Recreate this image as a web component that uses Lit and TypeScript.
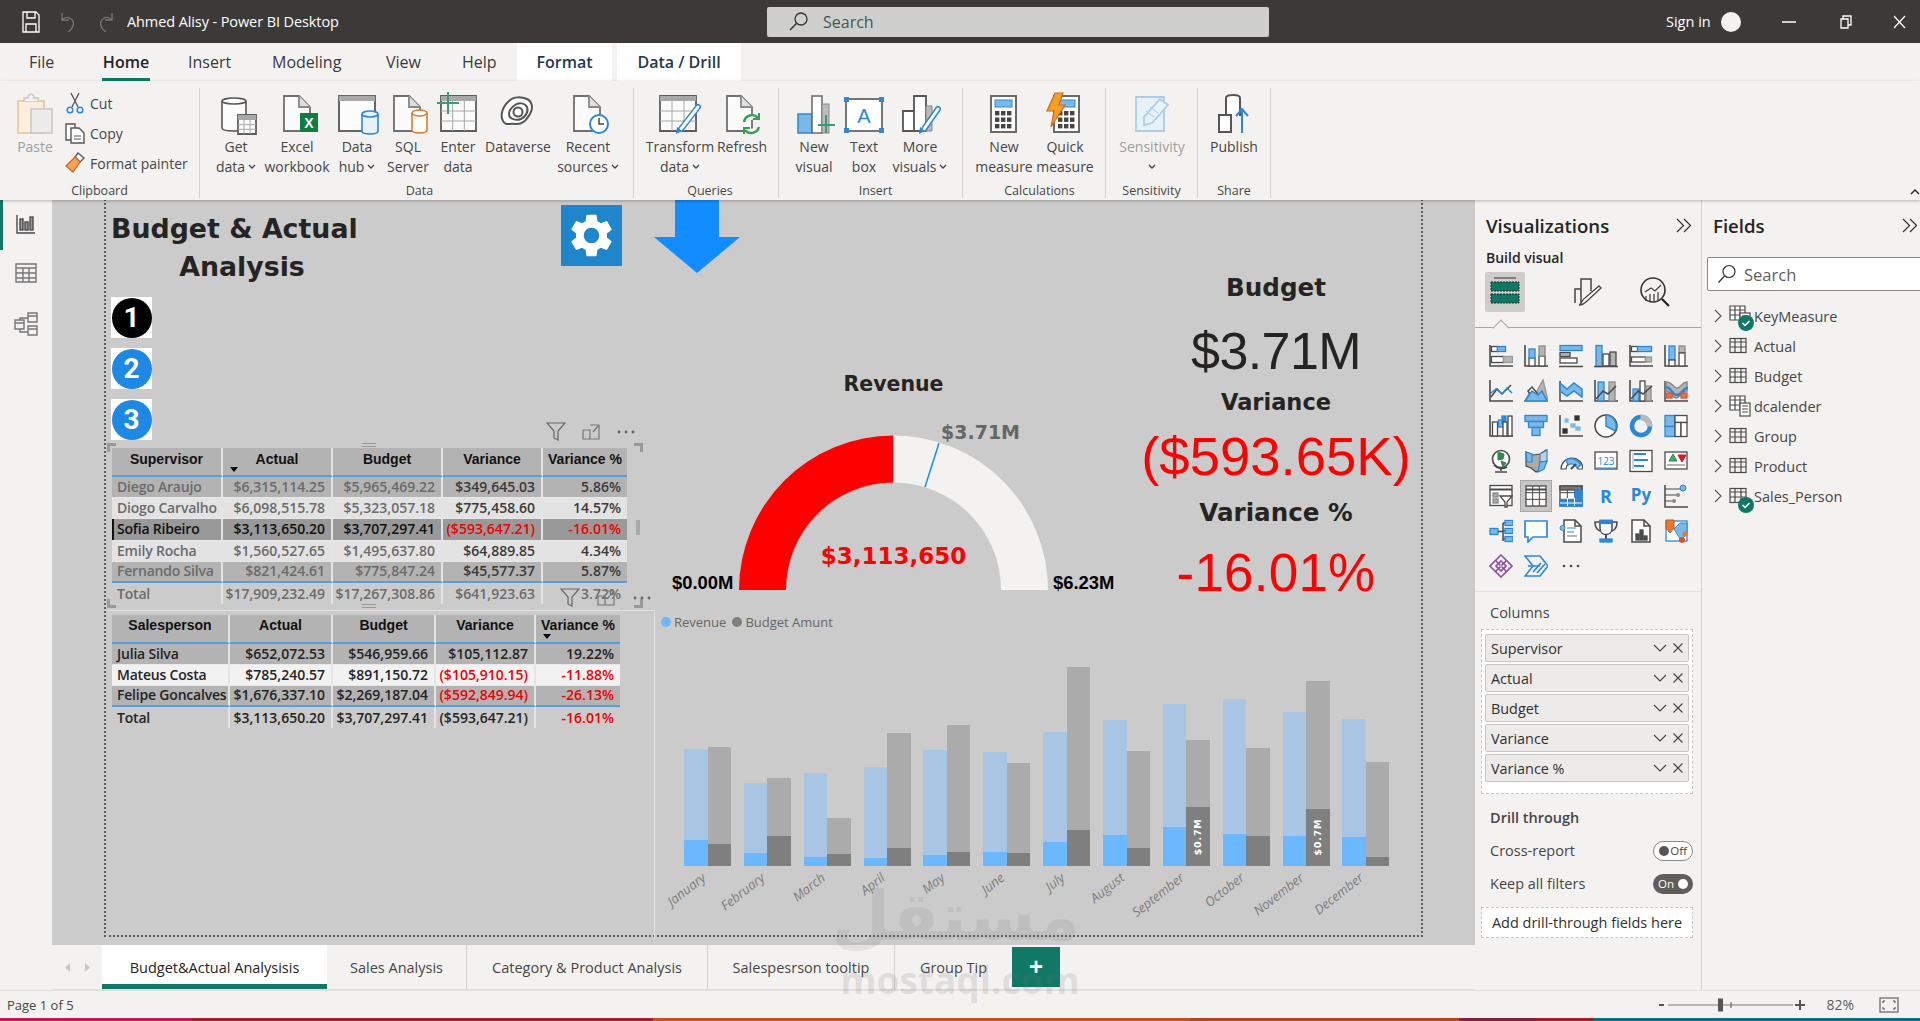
import { LitElement, html, css, svg } from "lit";
import { customElement } from "lit/decorators.js";

const K = "#4a4a4a", B = "#2b88d8", L = "#7ab8e8", G = "#b5b5b5", W = "#fff";
const R = (x: number, y: number, w: number, h: number, f = W, s = K) =>
  svg`<rect x=${x} y=${y} width=${w} height=${h} fill=${f} stroke=${s} stroke-width="1.3"/>`;
const P = (d: string, s = K, f = "none", sw = 1.5) => svg`<path d=${d} fill=${f} stroke=${s} stroke-width=${sw}/>`;
const A = P("M1 1v21h23", K, "none", 1.6);
const grid = (x: number, y: number, w: number, h: number, c: number, r: number, s = K, f = W) => {
  const parts = [R(x, y, w, h, f, s)];
  for (let i = 1; i < c; i++) parts.push(P(`M${x + (w * i) / c} ${y}v${h}`, s, "none", 1));
  for (let i = 1; i < r; i++) parts.push(P(`M${x} ${y + (h * i) / r}h${w}`, s, "none", 1));
  return parts;
};

const vizIcons = [
  svg`${A}${R(2.5, 2.5, 6, 5)}${R(8.5, 2.5, 8, 5, L, B)}${R(2.5, 12.5, 12, 6)}${R(14.5, 12.5, 9, 6, G, "#999")}`,
  svg`${A}${R(5, 14, 6, 8)}${R(5, 5, 6, 9, L, B)}${R(15, 12, 6, 10)}${R(15, 2, 6, 10, G, "#888")}`,
  svg`${R(1, 1.5, 22, 5, L, B)}${R(1, 8.5, 10, 4, G, K)}${R(1, 14, 17, 5)}${P("M0 22.5h24")}`,
  svg`${R(2, 1.5, 6, 21, L, B)}${R(9, 10, 6, 12, W, K)}${R(16, 8, 6, 14, G, K)}${P("M0 22.5h24")}`,
  svg`${A}${R(2.5, 2.5, 6, 5)}${R(8.5, 2.5, 14, 5, L, B)}${R(2.5, 13, 14, 5)}${R(16.5, 13, 6, 5, G, "#999")}`,
  svg`${A}${R(5, 2, 6, 14, L, B)}${R(5, 16, 6, 6)}${R(15, 2, 6, 7, G, "#888")}${R(15, 9, 6, 13)}`,
  svg`${A}${P("M2 18l6-8 5 5 9-9", K)}${P("M2 14l5-4 6 5 5-6 5 5", B)}`,
  svg`${P("M1 22L8 9l4 5 7-13 5 21z", "#999", G)}${P("M4 12l4-4 5 6-4 5z", K, W)}${P("M1 22l7-10 6 4 4-4 5 10z", B, L)}`,
  svg`${P("M1 2v20h23", K)}${P("M1 4l7 6 7-6 8 6v8l-8-6-7 5-7-5z", B, L)}`,
  svg`${A}${R(4, 3, 6, 19, L, B)}${R(15, 3, 6, 19, G, "#888")}${P("M2 20l7-8 5 3 8-8", K)}`,
  svg`${A}${R(4, 10, 6, 12, L, B)}${R(11, 2, 5, 20, W, K)}${R(17, 7, 5, 15, G, "#888")}${P("M2 20l7-8 5 3 9-8", K)}`,
  svg`${P("M1 2v20h23", K)}${P("M2 3c7 0 7 6 11 6s5-6 10-6v9c-5 0-7 7-11 7S7 12 2 12z", "#888", G)}${P("M2 8c5 0 6 8 11 8s5-7 11-7", B, "none", 2.5)}${R(2, 14, 6, 5, "#e8762d", "#c55")}${R(17, 14, 6, 5, "#e8762d", "#c55")}`,
  svg`${A}${R(3.5, 8, 5, 14)}${R(9.5, 6, 5, 7, L, B)}${R(13, 2, 4, 8, B, B)}${R(14, 8, 4, 14, W, K)}${R(19, 2, 4, 20, W, K)}`,
  svg`${R(1, 1.5, 22, 6, L, B)}${R(4.5, 7.5, 15, 6, L, B)}${R(8, 13.5, 8, 8, L, B)}`,
  svg`${A}${R(4, 15, 4, 4, "#333", "#333")}${R(16, 2, 4, 4, "#333", "#333")}${R(6, 5, 3, 3, L, L)}${R(12, 10, 4, 3, L, L)}${R(17, 13, 4, 3, L, L)}`,
  svg`<circle cx="12" cy="12" r="11" fill=${W} stroke=${K} stroke-width="1.5"/>${P("M12 1a11 11 0 0 1 9 16L12 12z", B, L)}`,
  svg`<circle cx="12" cy="12" r="9" fill="none" stroke=${B} stroke-width="4.5"/>${P("M12 1a11 11 0 0 1 11 11h-5a6 6 0 0 0-6-6z", "#bbb", "#bbb", 1)}`,
  svg`${R(1, 1.5, 10, 11, L, B)}${R(1, 12.5, 10, 10, L, B)}${R(11, 1.5, 12, 7, W, K)}${R(11, 8.5, 6, 14, W, K)}${R(17, 8.5, 6, 14, W, K)}`,
  svg`<circle cx="12" cy="10" r="8.5" fill=${W} stroke=${K} stroke-width="1.6"/>${P("M9 3l6 2-1 5-5 1zM12 12l5 2-3 4z", "#2e8b45", "#2e8b45", 1)}${P("M5 16a10 10 0 0 0 13 2M12 19v3M6 23h12", K)}`,
  svg`${P("M2 3l7 3 7-1 6-4v12l-4 7-6 3-5-4-5-2z", K, "#aaa", 1.2)}${P("M2 3l6 2v8H3zM16 13l7-1-3 8-6 3z", B, L, 1.2)}${P("M16 5l7-4v11l-7 1z", B, "#ccc", 1.2)}`,
  svg`${P("M2 20a11 11 0 0 1 22 0h-5a6 6 0 0 0-12 0z", K, "#fff", 1.2)}${P("M7 11a11 11 0 0 1 15 5l-4 3a6 6 0 0 0-9-3z", B, L, 1.2)}${P("M12 20l5-5", K, "none", 2)}`,
  svg`${R(1, 3, 22, 17, W, K)}<text x="12" y="16" text-anchor="middle" font-family="Open Sans" font-size="10" fill=${B}>123</text>${P("M2 19h20", B, "none", 1)}`,
  svg`${R(1, 1.5, 22, 21, W, K)}${P("M5 5h12M5 11h14M5 17h10", B, "none", 2)}${P("M4 4v16", "#aaa", "none", 1)}`,
  svg`${R(1, 3, 22, 17, W, K)}${P("M5 12l4-7 4 7z", "#2e8b45", "#56a06e", 1)}${P("M14 6h8l-4 7z", "#e81123", "#e81123", 1)}${P("M3 16h18", "#999", "none", 1.5)}`,
  svg`${R(1, 1.5, 22, 20, W, K)}${P("M1 5.5h22", K, "none", 2)}${R(4, 9, 5, 4, "#aaa", "#888")}${R(4, 15, 5, 4, "#aaa", "#888")}${P("M11 12h12l-5 6v5h-2v-5z", K, W, 1.3)}`,
  svg`${grid(2, 2, 20, 20, 3, 3, K, W)}${P("M2 5.5h20", K, "none", 2)}`,
  svg`${grid(1, 2, 22, 20, 3, 3, K, W)}${R(1, 2, 22, 4, "#777", K)}${R(16, 6, 7, 16, B, B)}${R(1, 16, 22, 6, B, B)}${P("M8.5 14v8M15.5 14v8M1 19h22", W, "none", 1)}`,
  svg`<text x="12" y="19" text-anchor="middle" font-family="Open Sans" font-weight="700" font-size="18" fill=${B}>R</text>`,
  svg`<text x="12" y="17" text-anchor="middle" font-family="Open Sans" font-weight="700" font-size="17" fill=${B}>Py</text>`,
  svg`${P("M1 1v22h24", K)}${P("M1 5h16M1 11h11M1 17h7", K, "none", 1.2)}<circle cx="19" cy="4" r="3" fill=${L} stroke=${B}/><circle cx="14" cy="11" r="2" fill="#888"/><circle cx="10" cy="17" r="2" fill="#888"/>`,
  svg`${R(1, 9.5, 8, 6, L, B)}${P("M9 12.5h5M14 4v18M14 4h2M14 12h2M14 20h2", K)}${R(16, 1.5, 8, 5, L, B)}${R(16, 9.5, 8, 5, L, B)}${R(16, 17.5, 8, 5, L, B)}`,
  svg`${P("M1 2h22v16H9l-5 5v-5H1z", B, W, 1.7)}`,
  svg`${P("M5 1h11l6 6v16H5z", K, W)}${P("M16 1v6h6", K)}<circle cx="3.5" cy="9" r="2.5" fill=${L} stroke=${B}/>${P("M8 9h9M8 13h7", B, "none", 1.2)}${P("M8 17h10", "#888", "none", 1.2)}`,
  svg`${P("M6 3H1c0 6 2 8 5 9M18 3h5c0 6-2 8-5 9", K)}${P("M6 1.5h12v8c0 4-3 6-6 6s-6-2-6-6z", K, W)}${R(6, 1.5, 12, 3, B, B)}${P("M12 16v4", K, "none", 2)}${R(6, 20, 12, 3, B, B)}`,
  svg`${P("M3 1h12l6 6v16H3z", K, W)}${P("M15 1v6h6", K)}${R(7, 15, 3, 6, K, K)}${R(11, 11, 3, 10, K, K)}${R(15, 17, 3, 4, K, K)}`,
  svg`${R(2, 2, 21, 20, W, B)}${P("M10 10l6-6h7v11l-6 6z", B, L, 1)}${P("M2 1h8v8l-4 5-4-5z", "#c85a1e", "#e8762d", 1)}<circle cx="21" cy="15" r="2.5" fill="#e8762d"/><circle cx="18" cy="21" r="3" fill="#d2581e"/>`,
  svg`<g fill="none" stroke="#8f4ea3" stroke-width="1.6"><path d="M12 1l11 11-11 11L1 12z"/><path d="M12 7l5 5-5 5-5-5z"/><path d="M6.5 6.5l5 5M17.5 6.5l-5 5M6.5 17.5l5-5M17.5 17.5l-5-5"/></g>`,
  svg`<g fill="none" stroke=${B} stroke-width="1.6"><path d="M1 2h15l8 10-8 10H1l8-10z"/><path d="M4 12h12M9 18l8-9M13 19l8-9"/></g>`,
  svg`<g fill=${K}><circle cx="5" cy="12" r="1.3"/><circle cx="12" cy="12" r="1.3"/><circle cx="19" cy="12" r="1.3"/></g>`,
];

const ic44 = (c: unknown) => html`<svg class="ric" width="44" height="44" viewBox="0 0 44 44" fill="none">${c}</svg>`;
const S = (d: string, s = "#5c5c5c", f = "none", sw = 1.8) => svg`<path d=${d} stroke=${s} fill=${f} stroke-width=${sw}/>`;
const pageIc = (x: number, w: number) => S(`M${x} 5h${w - 11}l11 11v24h-${w}z`, "#6f6f6f", "#fbfbfb");
const fold = (x: number, w: number) => S(`M${x + w - 11} 5v11h11`, "#888", "#e1dfdd");
const cyl = (x: number, y: number, w: number, h: number, s: string, f = "#f7f7f7") => svg`
  <path d="M${x} ${y}v${h}c0 ${4} ${w} ${4} ${w} 0v-${h}" stroke=${s} fill=${f} stroke-width="1.6"/>
  <ellipse cx=${x + w / 2} cy=${y} rx=${w / 2} ry="3" stroke=${s} fill=${f} stroke-width="1.6"/>`;
const pen = (x1: number, y1: number, x2: number, y2: number) => svg`
  <path d="M${x1} ${y1}L${x2} ${y2}" stroke=${B} stroke-width="6" stroke-linecap="round"/>
  <path d="M${x1} ${y1}L${x2} ${y2}" stroke="#fff" stroke-width="3" stroke-linecap="round"/>
  <path d="M${x2 - 4} ${y2 - 2}l-1 7 6-3z" fill=${B}/>`;
const tblGrid = (x: number, y: number, w: number, h: number) => {
  const p = [S(`M${x} ${y}h${w}v${h}h-${w}z`, "#5c5c5c", "#fbfbfb", 1.8), svg`<rect x=${x} y=${y} width=${w} height="5" fill="#a8a8a8"/>`];
  for (let i = 1; i < 3; i++) p.push(S(`M${x + (w / 3) * i} ${y + 5}v${h - 5}`, "#a8a8a8", "none", 1));
  for (let i = 1; i < 3; i++) p.push(S(`M${x} ${y + 5 + ((h - 5) / 3) * i}h${w}`, "#a8a8a8", "none", 1));
  return p;
};
const calc = (x: number) => {
  const p = [svg`<rect x=${x} y="5" width="25" height="36" fill="#fff" stroke="#6a6a6a" stroke-width="2"/>`, svg`<rect x=${x + 4} y="9" width="17" height="7" fill=${L} stroke=${B}/>`];
  for (let r = 0; r < 3; r++) for (let c = 0; c < 3; c++) p.push(svg`<rect x=${x + 4 + c * 6} y=${20 + r * 6.5} width="4.4" height="4.4" fill="#444"/>`);
  return p;
};

const ribbonGroups = [
  { name: "Data", cls: "g-data", items: [
    { w: 60, l: ["Get", "data"], ch: 1, i: ic44(svg`${cyl(8, 10, 24, 27, "#555", "#fcfcfc")}${tblGrid(24, 24, 18, 19)}`) },
    { w: 62, l: ["Excel", "workbook"], i: ic44(svg`${pageIc(9, 26)}${fold(9, 26)}<rect x="25" y="22" width="18" height="19" fill="#107c41"/><text x="34" y="36.5" text-anchor="middle" font-family="Liberation Sans" font-weight="700" font-size="14" fill="#fff">X</text>`) },
    { w: 58, l: ["Data", "hub"], ch: 1, i: ic44(svg`${S("M4 5h36v35H4z", "#666", "#fcfcfc", 2)}<rect x="4" y="5" width="36" height="5" fill="#a8a8a8"/>${cyl(27, 23, 16, 17, B, "#e8f2fb")}`) },
    { w: 44, l: ["SQL", "Server"], i: ic44(svg`${pageIc(8, 26)}${fold(8, 26)}${cyl(26, 22, 15, 17, "#e07a28", "#fff")}`) },
    { w: 56, l: ["Enter", "data"], i: ic44(svg`${tblGrid(5, 5, 35, 35)}<path d="M12 1v22M1 12h22" stroke="#3c9a78" stroke-width="2"/>`) },
    { w: 64, l: ["Dataverse"], i: ic44(svg`<g stroke="#555" stroke-width="2" fill="#fff"><path d="M13 10c5-5 13-4 18-2 6 3 6 10 3 15-4 6-7 11-15 10-5-1-10 2-12-3-3-5-1-14 6-20z"/><path d="M19 14c4-3 10-2 12 2 2 5-2 10-6 12-5 2-12 0-12-5 0-4 3-7 6-9z"/><circle cx="22" cy="21" r="4.5"/></g>`) },
    { w: 76, l: ["Recent", "sources"], ch: 1, i: ic44(svg`${pageIc(8, 26)}${fold(8, 26)}<circle cx="33" cy="33" r="9" fill="#fff" stroke=${B} stroke-width="2"/><path d="M33 27v6h5" stroke="#444" stroke-width="1.5"/>`) },
  ] },
  { name: "Queries", cls: "g-q", items: [
    { w: 76, l: ["Transform", "data"], ch: 1, i: ic44(svg`${tblGrid(2, 5, 36, 35)}${pen(40, 16, 23, 38)}`) },
    { w: 48, l: ["Refresh"], i: ic44(svg`${pageIc(7, 25)}${fold(7, 25)}<path d="M24 31a8 8 0 0 1 14-4M39 36a8 8 0 0 1-14 3" stroke="#3c9a58" stroke-width="2.4" fill="#f3f2f1"/><path d="M39 22v6h-6M24 43v-6h6" stroke="#3c9a58" stroke-width="2"/>`) },
  ] },
  { name: "Insert", cls: "g-ins", items: [
    { w: 50, l: ["New", "visual"], i: ic44(svg`<rect x="6" y="23" width="14" height="19" fill=${L} stroke=${B} stroke-width="1.5"/><rect x="20" y="5" width="10" height="37" fill="#fff" stroke="#666" stroke-width="1.5"/><rect x="30" y="13" width="7" height="29" fill="#bbb" stroke="#888"/><path d="M34 24v18M26 34h17" stroke="#3c9a78" stroke-width="2"/>`) },
    { w: 50, l: ["Text", "box"], i: ic44(svg`<rect x="4" y="8" width="36" height="32" fill="#fff" stroke="#555" stroke-width="1.6"/><g fill=${B}><rect x="2" y="6" width="5" height="5"/><rect x="37" y="6" width="5" height="5"/><rect x="2" y="37" width="5" height="5"/><rect x="37" y="37" width="5" height="5"/></g><text x="22" y="32" text-anchor="middle" font-family="Liberation Sans" font-size="20" fill=${B}>A</text>`) },
    { w: 62, l: ["More", "visuals"], ch: 1, i: ic44(svg`<path d="M5 20h11v20H5zM16 5h12v35H16z" fill="#fff" stroke="#555" stroke-width="1.8"/><path d="M28 15h6v25h-6z" fill="#bbb" stroke="#888"/>${pen(40, 18, 26, 38)}`) },
  ] },
  { name: "Calculations", cls: "g-calc", items: [
    { w: 60, l: ["New", "measure"], i: ic44(svg`${calc(9)}`) },
    { w: 62, l: ["Quick", "measure"], i: ic44(svg`${calc(11)}<path d="M12 2h8l-4 12h6L8 36l3-16H4z" fill="#f2a024" stroke="#d6651e" stroke-width="1.2"/>`) },
  ] },
  { name: "Sensitivity", cls: "g-sens", dim: 1, items: [
    { w: 92, l: ["Sensitivity"], ch2: 1, i: ic44(svg`<g stroke="#a9cde9" stroke-width="1.8" fill="#e8f1f8"><path d="M6 6h28v34H6z"/><path d="M14 26L30 8l8 6-16 18-8 2z"/></g><path d="M16 20l8 6M20 16l8 6" stroke="#a9cde9"/>`) },
  ] },
  { name: "Share", cls: "g-share", items: [
    { w: 72, l: ["Publish"], i: ic44(svg`<path d="M7 24h12v17H7zM14 24V7c0-4 14-4 14 0v18" stroke="#555" stroke-width="2" fill="#fff"/><path d="M30 42V18M24 25l6-7 6 7" stroke=${B} stroke-width="2"/>`) },
  ] },
];

const H1 = ["Supervisor", "Actual", "Budget", "Variance", "Variance %"];
const T1 = [
  ["Diego Araujo", "$6,315,114.25", "$5,965,469.22", "$349,645.03", "5.86%"],
  ["Diogo Carvalho", "$6,098,515.78", "$5,323,057.18", "$775,458.60", "14.57%"],
  ["Sofia Ribeiro", "$3,113,650.20", "$3,707,297.41", "($593,647.21)", "-16.01%"],
  ["Emily Rocha", "$1,560,527.65", "$1,495,637.80", "$64,889.85", "4.34%"],
  ["Fernando Silva", "$821,424.61", "$775,847.24", "$45,577.37", "5.87%"],
  ["Total", "$17,909,232.49", "$17,267,308.86", "$641,923.63", "3.72%"],
];
const H2 = ["Salesperson", "Actual", "Budget", "Variance", "Variance %"];
const T2 = [
  ["Julia Silva", "$652,072.53", "$546,959.66", "$105,112.87", "19.22%"],
  ["Mateus Costa", "$785,240.57", "$891,150.72", "($105,910.15)", "-11.88%"],
  ["Felipe Goncalves", "$1,676,337.10", "$2,269,187.04", "($592,849.94)", "-26.13%"],
  ["Total", "$3,113,650.20", "$3,707,297.41", "($593,647.21)", "-16.01%"],
];
const MONTHS = ["January","February","March","April","May","June","July","August","September","October","November","December"];
const BARS = [
  [448,720,442,732],[550,759,534,708],[519,771,654,762],[501,774,399,743],[450,765,375,757],[455,756,490,760],
  [397,726,202,689],[361,705,453,745],[312,682,420,620],[296,702,445,708],[335,708,244,628],[358,711,485,771],
];
const h = (t: number) => (798 - t) / 3;

const chev = html`<svg class="chev" width="8" height="6" viewBox="0 0 8 6"><path d="M1 1l3 3 3-3" fill="none" stroke="#444" stroke-width="1.3"/></svg>`;
const dbl = html`<svg width="16" height="15" viewBox="0 0 16 15"><path d="M1 1l6.5 6.5L1 14M8 1l6.5 6.5L8 14" fill="none" stroke="#333" stroke-width="1.2"/></svg>`;
const filt = html`<svg width="20" height="19" viewBox="0 0 20 19"><path d="M1 1h18l-7 8v9l-4-2V9z" fill="none" stroke="#666" stroke-width="1.2"/></svg>`;
const expand = html`<svg width="18" height="16" viewBox="0 0 18 16"><path d="M1 6v9h16V1H8M1 6h7v9M11 8l6-7M12 1h5v5" fill="none" stroke="#777" stroke-width="1.2"/></svg>`;
const dots = html`<svg width="20" height="4" viewBox="0 0 20 4"><g fill="#666"><circle cx="3" cy="2" r="1.4"/><circle cx="10" cy="2" r="1.4"/><circle cx="17" cy="2" r="1.4"/></g></svg>`;
const tableIc = html`<svg width="18" height="18" viewBox="0 0 18 18"><g fill="none" stroke="#4a4a4a" stroke-width="1.2"><rect x="1" y="1.5" width="16" height="14"/><path d="M1 5h16M1 10h16M6 2v13M12 2v13"/></g></svg>`;
const calcTable = html`<svg width="22" height="22" viewBox="0 0 22 22"><g fill="#fff" stroke="#4a4a4a" stroke-width="1.2"><path d="M1 1h15v14H1zM1 5h15M1 10h15M6 1v14M11 1v14"/><rect x="11" y="8" width="10" height="13"/><path d="M13 11h6M13 14h6M13 17h6"/></g></svg>`;
const badge = html`<svg class="badge" width="16" height="16" viewBox="0 0 16 16"><circle cx="8" cy="8" r="8" fill="#117865"/><path d="M4.5 8l2.5 2.5 4.5-4.5" fill="none" stroke="#fff" stroke-width="1.5"/></svg>`;
const fieldRows = [
  { n: "KeyMeasure", i: calcTable, b: 1 }, { n: "Actual", i: tableIc }, { n: "Budget", i: tableIc },
  { n: "dcalender", i: calcTable }, { n: "Group", i: tableIc }, { n: "Product", i: tableIc }, { n: "Sales_Person", i: tableIc, b: 1 },
];

@customElement("app-root")
export class AppRoot extends LitElement {
  static styles = css`
    :host { display: flex; flex-direction: column; width: 1920px; height: 1021px; overflow: hidden; position: relative;
      font-family: "Open Sans", "Noto Sans", sans-serif; color: #252423; background: #f3f2f1; }
    svg { display: block; flex: none; }
    .titlebar { height: 43px; background: #3b3a39; display: grid; grid-template-columns: 767px 502px 1fr; align-items: center; color: #fff; }
    .tb-left { display: flex; align-items: center; padding-left: 22px; }
    .tb-left .t { margin-left: 13px; font-size: 14.5px; letter-spacing: -.1px; white-space: nowrap; }
    .undo { margin-left: 20px; } .redo { margin-left: 22px; }
    .search { height: 30px; background: #cfcfcd; border-radius: 2px; display: flex; align-items: center; padding-left: 21px; gap: 14px; color: #3d5a5a; font-size: 16px; }
    .tb-right { display: flex; align-items: center; padding-left: 397px; font-size: 14.5px; }
    .avatar { width: 20px; height: 20px; border-radius: 50%; background: #f3f2f1; margin-left: 10px; }
    .wbtn { margin-left: 41px; } .wbtn2 { margin-left: 44px; } .wbtn3 { margin-left: 41px; }
    .tabs { height: 38px; display: grid; grid-template-columns: 73px 86px 84px 114px 76px 55px 95px 5px 124px; padding-left: 29px; font-size: 16px; color: #3b3a39; background: #f3f2f1; }
    .tabs > div { display: flex; align-items: center; }
    .tabs .home { align-self: stretch; font-weight: 600; color: #252423; border-bottom: 3px solid #117865; width: 48px; padding-top: 3px; box-sizing: border-box; justify-content: center; }
    .tabs .ctx { background: #fff; justify-content: center; font-weight: 600; color: #1f3a4d; }
    .ribbon { height: 119px; display: flex; background: #f3f2f1; padding-top: 7px; box-sizing: border-box; position: relative; z-index: 2; box-shadow: 0 1px 3px rgba(0,0,0,.25); font-size: 14px; color: #484644; }
    .grp { display: flex; flex-direction: column; box-sizing: border-box; border-right: 1px solid #d2d0ce; height: 110px; flex: none; }
    .grp .items { display: flex; height: 95px; }
    .grp .gname { text-align: center; font-size: 12.5px; line-height: 15px; margin-top: 2px; color: #484644; }
    .g-clip { width: 200px; } .g-data { width: 434px; padding-left: 6px; } .g-q { width: 145px; padding-left: 8px; }
    .g-ins { width: 184px; padding-left: 10px; } .g-calc { width: 143px; padding-left: 11px; } .g-sens { width: 92px; } .g-share { width: 73px; }
    .rb { display: flex; flex-direction: column; align-items: center; flex: none; line-height: 20px; white-space: nowrap; }
    .rb .ic { height: 49px; display: flex; align-items: center; justify-content: center; }
    .rb .ln { display: flex; align-items: center; gap: 3px; height: 20px; justify-content: center; }
    .dim { color: #a19f9d; }
    .clip { display: flex; height: 95px; }
    .paste { width: 60px; margin-left: 5px; }
    .small { display: flex; flex-direction: column; }
    .small > div { height: 30px; display: flex; align-items: center; gap: 5px; white-space: nowrap; padding-right: 6px; }
    .ribspacer { flex: 1; position: relative; display: flex; justify-content: flex-end; align-items: flex-end; padding: 0 0 5px; }
    .main { flex: none; height: 790px; display: flex; }
    .nav { width: 52px; flex: none; background: #f3f2f1; display: flex; flex-direction: column; align-items: center; position: relative; padding-top: 14px; box-sizing: border-box; gap: 29px; }
    .nav i { position: absolute; left: 0; top: 0; width: 3px; height: 50px; background: #117865; }
    .center { width: 1423px; flex: none; display: flex; flex-direction: column; }
    .canvas { height: 746px; background: #cbcbcb; position: relative; overflow: hidden; }
    .page { position: absolute; left: 52px; top: -4px; width: 1315px; height: 739px; border: 2px dotted #5e5e5e; border-top: 0; box-sizing: content-box; }
    .vtitle { position: absolute; left: 59px; top: 10px; width: 246px; text-align: center; font: 700 26.8px/38px "DejaVu Sans", sans-serif; color: #252423; white-space: nowrap; }
    .vtitle span { display: block; padding-left: 16px; }
    .gear { position: absolute; left: 509px; top: 5px; width: 61px; height: 61px; background: #2086cc; display: flex; align-items: center; justify-content: center; }
    .arrow { position: absolute; left: 602px; top: 0; }
    .num { position: absolute; left: 59px; width: 41px; height: 41px; background: #fff; display: flex; align-items: center; justify-content: center; }
    .num b { width: 40px; height: 40px; border-radius: 50%; background: #1e88e5; color: #fff; display: flex; align-items: center; justify-content: center; font: 700 28px "Roboto", sans-serif; }
    .num.n1 { top: 97px; } .num.n1 b { background: #000; } .num.n2 { top: 148px; } .num.n3 { top: 199px; }
    .vh { position: absolute; display: flex; align-items: center; }
    .vh1 { left: 494px; top: 222px; gap: 16px; } .vh2 { left: 508px; top: 388px; gap: 17px; z-index: 3; }
    .tbl { position: absolute; display: grid; font-size: 14px; font-weight: 600; line-height: 1; white-space: nowrap; }
    .t1 { left: 60px; top: 248px; grid-template-columns: 111px 110px 110px 100px 84px; grid-template-rows: 29px repeat(6, 21.2px); color: #6b6b6b; }
    .t2 { left: 60px; top: 415px; grid-template-columns: 118px 103px 103px 100px 84px; grid-template-rows: 28.5px repeat(4, 21.2px); color: #252423; }
    .c { display: flex; align-items: center; justify-content: flex-end; padding: 0 6px 0 5px; box-sizing: border-box; border-right: 2px solid #e4e4e4; min-width: 0; }
    .c:nth-child(5n) { border-right: 0; }
    .c.nm { justify-content: flex-start; letter-spacing: -.2px; }
    .c.hd { background: #b3b3b3; align-items: flex-start; justify-content: center; padding: 3px 0 0; font: 700 14px "Liberation Sans", sans-serif; color: #111; position: relative; border-bottom: 2px solid #5a9fdc; }
    .t2 .c.hd { padding-top: 2px; }
    .sort { position: absolute; left: 7px; bottom: 3px; width: 0; height: 0; border: 4px solid transparent; border-top: 5px solid #000; border-bottom: 0; }
    .odd { background: #b3b3b3; } .even { background: #e3e3e3; } .sel { background: #999; color: #111; } .wh { background: #f2f2f2; }
    .dk { color: #3a3a3a; } .red { color: #f00000; }
    .rowline { border-bottom: 1px solid #e8e8e8; }
    .blue { border-bottom: 2px solid #5a9fdc; }
    .selbar { box-shadow: inset 2px 0 0 #111; }
    .handles { position: absolute; left: 55px; top: 243px; width: 536px; height: 165px; pointer-events: none; }
    .handles u { position: absolute; width: 9px; height: 9px; border: 3px solid #999; box-sizing: border-box; }
    .handles .tl { left: 0; top: 0; border-right: 0; border-bottom: 0; } .handles .tr { right: 0; top: 0; border-left: 0; border-bottom: 0; }
    .handles .bl { left: 0; bottom: 0; border-right: 0; border-top: 0; } .handles .br { right: 0; bottom: 0; border-left: 0; border-top: 0; }
    .handles .tm, .handles .bm { left: 255px; width: 14px; height: 4px; border: 1px solid #999; border-width: 1px 0; }
    .handles .tm { top: 0; } .handles .bm { bottom: 0; }
    .handles .rm { right: 3px; top: 77px; width: 4px; height: 15px; background: #a9a9a9; border: 0; }
    .panel2 { position: absolute; left: 55px; top: 410px; width: 548px; height: 330px; border: solid #e2e2e2; border-width: 1px 1px 0 0; box-sizing: border-box; }
    .gauge { position: absolute; left: 608px; top: 165px; }
    .gauge text { font-family: "DejaVu Sans", sans-serif; font-weight: 700; }
    .gauge .lab { font: 700 18.4px "Liberation Sans", sans-serif; fill: #000; }
    .kpi { position: absolute; left: 1074px; top: 60px; width: 300px; display: flex; flex-direction: column; align-items: center; white-space: nowrap; }
    .kpi .l { font: 700 24.6px "DejaVu Sans", sans-serif; color: #252423; display: flex; align-items: center; }
    .kpi .v { font-family: "Liberation Sans", sans-serif; display: flex; align-items: center; }
    .kl1 { height: 54px; }
    .kv1 { height: 74px; font-size: 52px; letter-spacing: -.6px; color: #252423; }
    .kpi .kl2 { height: 28px; font-size: 22.5px; }
    .kv2 { height: 80px; font-size: 54.5px; color: #f00; }
    .kl3 { height: 32px; }
    .kv3 { height: 88px; font-size: 53px; color: #f00; letter-spacing: .2px; }
    .legend { position: absolute; left: 609px; top: 413px; display: flex; align-items: center; font-size: 13px; color: #666; }
    .legend i { width: 10px; height: 10px; border-radius: 50%; margin-right: 3px; }
    .legend i.a { background: #6cb8ff; } .legend i.b { background: #7f7f7f; margin-left: 6px; }
    .chart { position: absolute; left: 632px; top: 434px; height: 232px; display: flex; align-items: flex-end; }
    .mon { width: 59.87px; height: 100%; display: flex; align-items: flex-end; position: relative; flex: none; }
    .bar { width: 23.5px; position: relative; flex: none; display: flex; align-items: flex-end; }
    .bar.bl { background: #a8c6e4; } .bar.gr { background: #ababab; }
    .bar b { display: block; width: 100%; }
    .bar.bl b { background: #6cb8ff; } .bar.gr b { background: #7f7f7f; }
    .dl { position: absolute; left: 0; right: 0; bottom: 0; display: flex; align-items: center; justify-content: center; color: #fff; font: 700 9.5px "DejaVu Sans", sans-serif; letter-spacing: .8px; writing-mode: vertical-rl; transform: rotate(180deg); }
    .ml { position: absolute; right: 45px; top: 100%; margin-top: 4px; font-size: 13px; font-style: italic; color: #7d7d7d; transform: rotate(-38deg); transform-origin: right top; white-space: nowrap; line-height: 14px; }
    .pages { height: 44px; display: flex; background: #f3f2f1; border-bottom: 1px solid #e1dfdd; box-sizing: content-box; font-size: 14.5px; color: #484644; }
    .parrows { width: 50px; display: flex; align-items: center; justify-content: space-around; padding: 0 6px; box-sizing: border-box; flex: none; }
    .ptab { display: flex; align-items: center; justify-content: center; border-right: 1px solid #d2d0ce; box-sizing: border-box; height: 44px; flex: none; white-space: nowrap; }
    .ptab.on { background: #fff; border-bottom: 5px solid #117865; border-right: 0; color: #252423; font-weight: 400; width: 225px; padding-top: 5px; }
    .p2 { width: 140px; } .p3 { width: 241px; } .p4 { width: 187px; } .p5 { width: 117px; border-right: 0; }
    .plus { width: 48px; height: 40px; margin-top: 2px; background: #117865; color: #fff; font: 700 24px "Liberation Sans", sans-serif; display: flex; align-items: center; justify-content: center; flex: none; }
    .viz { width: 227px; flex: none; border-right: 1px solid #d2d0ce; background: #f3f2f1; display: flex; flex-direction: column; box-sizing: border-box; position: relative; }
    .phead { height: 50px; flex: none; display: flex; align-items: center; justify-content: space-between; padding: 0 9px 0 11px; font-size: 18.6px; font-weight: 600; color: #252423; }
    .viz .sub { padding-left: 11px; font-size: 14px; font-weight: 600; height: 16px; line-height: 16px; }
    .vtabs { display: flex; align-items: center; height: 40px; margin: 6px 0 0 10px; flex: none; }
    .vtabs .on { width: 40px; height: 40px; background: #cfcdcb; border-radius: 2px; display: flex; align-items: center; justify-content: center; }
    .vtabs .i2 { margin-left: 48px; } .vtabs .i3 { margin-left: 36px; }
    .vline { height: 1px; background: #a6a6a6; margin-top: 15px; position: relative; flex: none; }
    .vline i { position: absolute; left: 20px; top: -5px; width: 11px; height: 11px; background: #f3f2f1; border: solid #a6a6a6; border-width: 1px 0 0 1px; transform: rotate(45deg); }
    .vgrid { display: grid; grid-template-columns: repeat(6, 35px); grid-auto-rows: 35px; padding: 10px 0 0 8.5px; flex: none; }
    .vgrid > div { display: flex; align-items: center; justify-content: center; }
    .vgrid > div.act > span { display: flex; background: #c8c6c4; outline: 1px solid #a6a6a6; padding: 3px; }
    .vdiv { height: 1px; background: #e1dfdd; margin-top: 8px; flex: none; }
    .sec { padding-left: 15px; font-size: 14.5px; height: 40px; display: flex; align-items: center; color: #484644; flex: none; }
    .well { margin: -3px 8px 0 6px; height: 165px; box-sizing: border-box; background: #fff; border: 1px dashed #c8c6c4; padding: 4px 3px; display: flex; flex-direction: column; gap: 2px; flex: none; }
    .pill { height: 28px; box-sizing: border-box; background: #edebe9; border: 1px solid #c8c6c4; border-radius: 2px; display: flex; align-items: center; padding: 0 5px; font-size: 14.4px; color: #323130; flex: none; }
    .pill span { flex: 1; }
    .pill svg { margin-left: 6px; }
    .drill { padding-left: 15px; font-size: 14.5px; font-weight: 600; color: #484644; margin-top: 16px; height: 16px; line-height: 16px; flex: none; }
    .trow { display: flex; align-items: center; justify-content: space-between; padding: 0 8px 0 15px; height: 33px; font-size: 14.5px; color: #484644; flex: none; }
    .tr1 { margin-top: 8px; }
    .tg { width: 40px; height: 20px; border-radius: 10px; box-sizing: border-box; display: flex; align-items: center; justify-content: space-between; padding: 0 5px; font-size: 11.5px; }
    .tg i { width: 10px; height: 10px; border-radius: 50%; }
    .tg.off { background: #fff; border: 1px solid #8a8886; } .tg.off i { background: #555; }
    .tg.on { background: #605e5c; color: #fff; } .tg.on i { background: #fff; }
    .addf { margin: 7px 8px 0 6px; height: 31px; box-sizing: border-box; background: #fff; border: 1px dashed #c8c6c4; display: flex; align-items: center; justify-content: center; font-size: 14.5px; color: #323130; white-space: nowrap; flex: none; }
    .fields { flex: 1; background: #f3f2f1; overflow: hidden; }
    .fields .phead { padding: 0 2px 0 11px; }
    .fsearch { margin: 7px -6px 0 5px; height: 32px; background: #fff; border: 1px solid #8a8886; border-radius: 2px; display: flex; align-items: center; padding-left: 9px; gap: 7px; font-size: 16.5px; color: #605e5c; }
    .flist { padding-top: 10px; }
    .frow { height: 30px; display: flex; align-items: center; font-size: 14.5px; color: #484644; padding-left: 12px; position: relative; }
    .frow .fi { margin-left: 7px; width: 22px; margin-right: 3px; position: relative; }
    .badge { position: absolute; left: 9px; top: 10px; }
    .status { height: 28px; flex: none; background: #f3f2f1; border-top: 1px solid #e1dfdd; box-sizing: border-box; display: flex; align-items: center; font-size: 13px; color: #484644; padding-left: 7px; }
    .zoom { margin-left: auto; display: flex; align-items: center; padding-right: 21px; }
    .zoom .pct { font-size: 14px; margin: 0 25px 0 17px; color: #605e5c; }
    .stripe { height: 3px; flex: none; background: linear-gradient(90deg, #c2185b 0 10%, #a81e28 10% 34%, #c8501e 34% 62%, #b5451e 62% 76%, #7d2440 76% 80%, #a81e28 80% 83%, #0f6e84 83% 100%); }
    .wm { position: absolute; left: 0; top: 0; pointer-events: none; z-index: 5; }
    .wm .ar { position: absolute; left: 840px; top: 872px; width: 240px; text-align: center; font: 700 68px/90px "DejaVu Sans", sans-serif; color: rgba(110,110,110,.12); white-space: nowrap; }
    .wm .la { position: absolute; left: 840px; top: 958px; width: 240px; text-align: center; font: 700 37px/44px "Open Sans", sans-serif; color: rgba(110,110,110,.16); white-space: nowrap; }
  `;

  private tbl(cls: string, head: string[], rows: string[][], sortCol: number, kind: 1 | 2) {
    return html`<div class="tbl ${cls}">
      ${head.map((t, i) => html`<div class="c hd">${t}${i === sortCol ? html`<i class="sort"></i>` : ""}</div>`)}
      ${rows.map((r, ri) => r.map((v, ci) => {
        const isTotal = ri === rows.length - 1;
        let cl = ci === 0 ? "nm " : "";
        if (!isTotal) {
          if (kind === 1) cl += ri === 2 ? "sel " : ri % 2 ? "even " : "odd ";
          else cl += ri === 1 ? "wh " : "odd ";
          if (ri < rows.length - 2) cl += "rowline ";
          else cl += "blue ";
        }
        if (kind === 1 && !isTotal && ci >= 3) cl += "dk ";
        if (kind === 1 && ri === 2 && ci === 0) cl += "selbar ";
        const neg = v.startsWith("(") || v.startsWith("-");
        if (neg && !(isTotal && ci === 3)) cl += "red ";
        return html`<div class="c ${cl}">${v}</div>`;
      }))}
    </div>`;
  }

  private ribbon() {
    return html`<div class="ribbon">
      <div class="grp g-clip">
        <div class="clip">
          <div class="rb paste dim">
            <div class="ic"><svg width="44" height="44" viewBox="0 0 44 44" fill="none"><path d="M5 10h26v32H5z" fill="#fbeedd" stroke="#e8cfa8" stroke-width="2"/><path d="M11 10V7h4c0-5 6-5 6 0h4v3" fill="#f3f2f1" stroke="#c8c6c4" stroke-width="1.5"/><path d="M18 18h21v24H18z" fill="#ececec" stroke="#c8c6c4" stroke-width="1.5"/></svg></div>
            <div class="ln">Paste</div>
          </div>
          <div class="small">
            <div><svg width="20" height="22" viewBox="0 0 20 22" fill="none"><path d="M6 1l7 14M14 1L7 15" stroke="#555" stroke-width="1.3"/><circle cx="5" cy="18" r="2.8" stroke=${B} stroke-width="1.5"/><circle cx="15" cy="18" r="2.8" stroke=${B} stroke-width="1.5"/></svg>Cut</div>
            <div><svg width="20" height="22" viewBox="0 0 20 22" fill="none"><path d="M1 2h9v16H1z" fill="#fff" stroke="#555" stroke-width="1.4"/><path d="M6 6h8l5 5v10H6z" fill="#fff" stroke="#555" stroke-width="1.4"/><path d="M9 14h7M9 17h7" stroke="#555"/></svg>Copy</div>
            <div><svg width="20" height="22" viewBox="0 0 20 22" fill="none"><path d="M13 1l6 5-4 4-5-5z" fill="#fff" stroke="#555" stroke-width="1.3"/><path d="M10 5l5 5-7 10-7-6z" fill="#f2a45c" stroke="#d6651e" stroke-width="1.3"/></svg>Format painter</div>
          </div>
        </div>
        <div class="gname">Clipboard</div>
      </div>
      ${ribbonGroups.map((g: any) => html`<div class="grp ${g.cls}">
        <div class="items">${g.items.map((it: any) => html`<div class="rb ${g.dim ? "dim" : ""}" style="width:${it.w}px">
          <div class="ic">${it.i}</div>
          ${it.l.map((t: string, i: number) => html`<div class="ln">${t}${it.ch && i === it.l.length - 1 ? chev : ""}</div>`)}
          ${it.ch2 ? html`<div class="ln">${chev}</div>` : ""}
        </div>`)}</div>
        <div class="gname">${g.name}</div>
      </div>`)}
      <div class="ribspacer"><svg width="10" height="7" viewBox="0 0 10 7"><path d="M1 6l4-4 4 4" fill="none" stroke="#222" stroke-width="1.4"/></svg></div>
    </div>`;
  }

  private canvas() {
    return html`<div class="canvas">
      <div class="page"></div>
      <div class="vtitle">Budget & Actual<span>Analysis</span></div>
      <div class="gear"><svg width="43" height="43" viewBox="2 2 20 20"><path fill="#fff" fill-rule="evenodd" d="M19.14 12.94c.04-.3.06-.61.06-.94 0-.32-.02-.64-.07-.94l2.03-1.58a.49.49 0 0 0 .12-.61l-1.92-3.32a.488.488 0 0 0-.59-.22l-2.39.96c-.5-.38-1.03-.7-1.62-.94l-.36-2.54a.484.484 0 0 0-.48-.41h-3.84c-.24 0-.43.17-.47.41l-.36 2.54c-.59.24-1.13.57-1.62.94l-2.39-.96c-.22-.08-.47 0-.59.22L2.74 8.87c-.12.21-.08.47.12.61l2.03 1.58c-.05.3-.09.63-.09.94s.02.64.07.94l-2.03 1.58a.49.49 0 0 0-.12.61l1.92 3.32c.12.22.37.29.59.22l2.39-.96c.5.38 1.03.7 1.62.94l.36 2.54c.05.24.24.41.48.41h3.84c.24 0 .44-.17.47-.41l.36-2.54c.59-.24 1.13-.56 1.62-.94l2.39.96c.22.08.47 0 .59-.22l1.92-3.32c.12-.22.07-.47-.12-.61l-2.01-1.58zM12 15.6c-1.98 0-3.6-1.62-3.6-3.6s1.62-3.6 3.6-3.6 3.6 1.62 3.6 3.6-1.62 3.6-3.6 3.6z"/></svg></div>
      <svg class="arrow" width="86" height="74" viewBox="0 0 86 74"><path d="M21 0h44v37h21L43 73 0 37h21z" fill="#118dff"/></svg>
      <div class="num n1"><b>1</b></div><div class="num n2"><b>2</b></div><div class="num n3"><b>3</b></div>
      <div class="vh vh1">${filt}${expand}${dots}</div>
      ${this.tbl("t1", H1, T1, 1, 1)}
      <div class="handles"><u class="tl"></u><u class="tr"></u><u class="bl"></u><u class="br"></u><u class="tm"></u><u class="bm"></u><u class="rm"></u></div>
      <div class="panel2"></div>
      <div class="vh vh2">${filt}${expand}${dots}</div>
      ${this.tbl("t2", H2, T2, 4, 2)}
      <svg class="gauge" width="470" height="240" viewBox="0 0 470 240">
        <path d="M79 225A154.5 154.5 0 0 1 233.5 70.5V117.5A107.5 107.5 0 0 0 126 225z" fill="#f00"/>
        <path d="M233.5 70.5A154.5 154.5 0 0 1 388 225H341A107.5 107.5 0 0 0 233.5 117.5z" fill="#f3f2f1"/>
        <path d="M265 122L279 78" stroke="#118dff" stroke-width="1.5"/>
        <text x="233.5" y="26" text-anchor="middle" font-size="20.5" fill="#252423">Revenue</text>
        <text x="281" y="74" font-size="19" fill="#666">$3.71M</text>
        <text x="233.5" y="199" text-anchor="middle" font-size="23" fill="#f00">$3,113,650</text>
        <text class="lab" x="12" y="224">$0.00M</text>
        <text class="lab" x="393" y="224">$6.23M</text>
      </svg>
      <div class="kpi">
        <div class="l kl1">Budget</div>
        <div class="v kv1">$3.71M</div>
        <div class="l kl2">Variance</div>
        <div class="v kv2">($593.65K)</div>
        <div class="l kl3">Variance %</div>
        <div class="v kv3">-16.01%</div>
      </div>
      <div class="legend"><i class="a"></i>Revenue<i class="b"></i>Budget Amunt</div>
      <div class="chart">
        ${BARS.map((b, i) => html`<div class="mon">
          <div class="bar bl" style="height:${h(b[0])}px"><b style="height:${h(b[1])}px"></b></div>
          <div class="bar gr" style="height:${h(b[2])}px"><b style="height:${h(b[3])}px"></b>
            ${i === 8 || i === 10 ? html`<span class="dl" style="height:${h(b[3])}px">$0.7M</span>` : ""}
          </div>
          <div class="ml">${MONTHS[i]}</div>
        </div>`)}
      </div>
    </div>`;
  }

  private vizPanel() {
    const pills = ["Supervisor", "Actual", "Budget", "Variance", "Variance %"];
    return html`<div class="viz">
      <div class="phead">Visualizations ${dbl}</div>
      <div class="sub">Build visual</div>
      <div class="vtabs">
        <div class="on"><svg width="32" height="32" viewBox="0 0 32 32"><path d="M5 2h22" stroke="#333"/><rect x="2" y="6" width="28" height="9" fill="#117865" stroke="#222" stroke-dasharray="2 1"/><rect x="2" y="18" width="28" height="9" fill="#117865" stroke="#222" stroke-dasharray="2 1"/></svg></div>
        <svg class="i2" width="30" height="30" viewBox="0 0 30 30" fill="none"><path d="M2 26V12h6M8 26V2h10v12" stroke="#444" stroke-width="1.5"/><path d="M28 11L14 24c-2 2-5 4-8 4 3-1 3-6 6-7l14-12z" fill="#fff" stroke="#444" stroke-width="1.3"/></svg>
        <svg class="i3" width="32" height="32" viewBox="0 0 32 32" fill="none"><circle cx="14" cy="14" r="12" stroke="#333" stroke-width="1.6"/><path d="M23 23l7 7" stroke="#222" stroke-width="2.2"/><path d="M6 16l6-4 4 3 6-6M7 25v-5M11 25v-7M15 25v-7M19 25v-9" stroke="#444" stroke-width="1.3"/></svg>
      </div>
      <div class="vline"><i></i></div>
      <div class="vgrid">${vizIcons.map((ic, i) => html`<div class=${i === 25 ? "act" : ""}><span><svg width="24" height="24" viewBox="0 0 24 24">${ic}</svg></span></div>`)}</div>
      <div class="vdiv"></div>
      <div class="sec">Columns</div>
      <div class="well">${pills.map((p) => html`<div class="pill"><span>${p}</span>
        <svg width="14" height="8" viewBox="0 0 14 8"><path d="M1 1l6 6 6-6" fill="none" stroke="#444" stroke-width="1.1"/></svg>
        <svg width="10" height="10" viewBox="0 0 10 10"><path d="M0.5 0.5l9 9M9.5 0.5l-9 9" stroke="#444" stroke-width="1.1"/></svg></div>`)}</div>
      <div class="drill">Drill through</div>
      <div class="trow tr1">Cross-report <div class="tg off"><i></i>Off</div></div>
      <div class="trow">Keep all filters <div class="tg on">On<i></i></div></div>
      <div class="addf">Add drill-through fields here</div>
    </div>`;
  }

  private fieldsPanel() {
    return html`<div class="fields">
      <div class="phead">Fields ${dbl}</div>
      <div class="fsearch"><svg width="20" height="20" viewBox="0 0 20 20" fill="none"><circle cx="12" cy="7.5" r="6" stroke="#333" stroke-width="1.2"/><path d="M7.5 12L1.5 18.5" stroke="#333" stroke-width="1.3"/></svg>Search</div>
      <div class="flist">${fieldRows.map((r) => html`<div class="frow">
        <svg width="8" height="14" viewBox="0 0 8 14"><path d="M1 1l6 6-6 6" fill="none" stroke="#555" stroke-width="1.1"/></svg>
        <span class="fi">${r.i}${r.b ? badge : ""}</span>${r.n}</div>`)}</div>
    </div>`;
  }

  render() {
    return html`
      <div class="titlebar">
        <div class="tb-left">
          <svg width="18" height="22" viewBox="0 0 18 22" fill="none" stroke="#fff" stroke-width="1.3"><path d="M1 1h13l3 3v17H1zM5 1v6h8V1M4 21v-8h10v8"/></svg>
          <svg class="undo" width="16" height="22" viewBox="0 0 16 22" fill="none" stroke="#777" stroke-width="1.3"><path d="M2 2v7h7M2 9c6-6 13 0 11 6-1 3-3 5-5 6"/></svg>
          <svg class="redo" width="16" height="22" viewBox="0 0 16 22" fill="none" stroke="#777" stroke-width="1.3"><path d="M14 2v7H7M14 9C8 3 1 9 3 15c1 3 3 5 5 6"/></svg>
          <span class="t">Ahmed Alisy - Power BI Desktop</span>
        </div>
        <div class="search"><svg width="21" height="21" viewBox="0 0 21 21" fill="none"><circle cx="13" cy="8" r="6" stroke="#333" stroke-width="1.3"/><path d="M8.5 12.5L2 19" stroke="#333" stroke-width="1.5"/></svg>Search</div>
        <div class="tb-right">Sign in <i class="avatar"></i>
          <svg class="wbtn" width="14" height="2" viewBox="0 0 14 2"><path d="M0 1h14" stroke="#fff" stroke-width="1.5"/></svg>
          <svg class="wbtn2" width="12" height="14" viewBox="0 0 12 14" fill="none" stroke="#fff" stroke-width="1.3"><path d="M1 4h7v9H1zM3 4V1h8v9H8"/></svg>
          <svg class="wbtn3" width="13" height="14" viewBox="0 0 13 14"><path d="M1 1l11 12M12 1L1 13" stroke="#fff" stroke-width="1.3"/></svg>
        </div>
      </div>
      <div class="tabs">
        <div>File</div><div class="home">Home</div><div>Insert</div><div>Modeling</div><div>View</div><div>Help</div>
        <div class="ctx">Format</div><div></div><div class="ctx">Data / Drill</div>
      </div>
      ${this.ribbon()}
      <div class="main">
        <div class="nav"><i></i>
          <svg width="20" height="20" viewBox="0 0 20 20" fill="none" stroke="#4a4a4a" stroke-width="1.4"><path d="M1 1v18h18"/><rect x="4" y="5" width="3" height="11" fill="#999"/><rect x="9" y="8" width="3" height="8" fill="#999"/><rect x="14" y="3" width="3" height="13" fill="#999"/></svg>
          <svg width="22" height="20" viewBox="0 0 22 20" fill="none" stroke="#777" stroke-width="1.4"><path d="M1 1h20v18H1zM1 5h20M1 10h20M1 15h20M8 5v14M14 5v14"/></svg>
          <svg width="24" height="24" viewBox="0 0 24 24" fill="none" stroke="#777" stroke-width="1.4"><path d="M14 1h9v9h-9zM14 4h9M1 8h9v9H1zM1 11h9M14 14h9v9h-9zM14 17h9M10 6h4M6 8V6h8M6 17v3h8"/></svg>
        </div>
        <div class="center">
          ${this.canvas()}
          <div class="pages">
            <div class="parrows"><svg width="6" height="9" viewBox="0 0 6 9"><path d="M5 0L0 4.5 5 9z" fill="#c8c6c4"/></svg><svg width="6" height="9" viewBox="0 0 6 9"><path d="M1 0l5 4.5L1 9z" fill="#c8c6c4"/></svg></div>
            <div class="ptab on">Budget&Actual Analysisis</div>
            <div class="ptab p2">Sales Analysis</div>
            <div class="ptab p3">Category & Product Analysis</div>
            <div class="ptab p4">Salespesrson tooltip</div>
            <div class="ptab p5">Group Tip</div>
            <div class="plus">+</div>
          </div>
        </div>
        ${this.vizPanel()}
        ${this.fieldsPanel()}
      </div>
      <div class="status">Page 1 of 5
        <div class="zoom">
          <svg width="150" height="16" viewBox="0 0 150 16"><path d="M0 8h5" stroke="#555" stroke-width="2"/><path d="M9 8h125" stroke="#777" stroke-width="1"/><rect x="59" y="1.5" width="5" height="13" fill="#555"/><path d="M72 5v6" stroke="#555"/><path d="M141 3v10M136 8h10" stroke="#555" stroke-width="2"/></svg>
          <span class="pct">82%</span>
          <svg width="20" height="16" viewBox="0 0 20 16" fill="none"><rect x="1" y="1" width="18" height="14" stroke="#777" stroke-width="1.4"/><path d="M4 6V4h2M16 6V4h-2M4 10v2h2M16 10v2h-2" stroke="#444"/></svg>
        </div>
      </div>
      <div class="stripe"></div>
      <div class="wm"><div class="ar" lang="ar" dir="rtl">مستقل</div><div class="la">mostaql.com</div></div>
    `;
  }
}
